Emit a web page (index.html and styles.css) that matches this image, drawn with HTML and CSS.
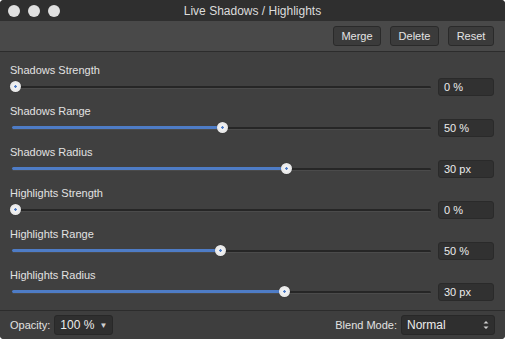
FILE: index.html
```html
<!DOCTYPE html>
<html lang="en">
<head>
  <meta charset="UTF-8" />
  <title>Live Shadows / Highlights</title>
  <link rel="stylesheet" href="styles.css">
</head>
<body>
  <div class="window">
    <header class="titlebar">
      <div class="lights">
        <span class="light"></span>
        <span class="light"></span>
        <span class="light"></span>
      </div>
      <h1>Live Shadows / Highlights</h1>
    </header>

    <div class="toolbar">
      <button class="btn-merge">Merge</button>
      <button class="btn-delete">Delete</button>
      <button class="btn-reset">Reset</button>
    </div>

    <div class="panel">
      <div class="row">
        <label>Shadows Strength</label>
        <div class="control">
          <div class="track">
            <div class="fill" style="width: 3px"></div>
            <span class="knob" style="left: 3px"></span>
          </div>
          <div class="value">0 %</div>
        </div>
      </div>
      <div class="row">
        <label>Shadows Range</label>
        <div class="control">
          <div class="track">
            <div class="fill" style="width: 210px"></div>
            <span class="knob" style="left: 210px"></span>
          </div>
          <div class="value">50 %</div>
        </div>
      </div>
      <div class="row">
        <label>Shadows Radius</label>
        <div class="control">
          <div class="track">
            <div class="fill" style="width: 274px"></div>
            <span class="knob" style="left: 274px"></span>
          </div>
          <div class="value">30 px</div>
        </div>
      </div>
      <div class="row">
        <label>Highlights Strength</label>
        <div class="control">
          <div class="track">
            <div class="fill" style="width: 3px"></div>
            <span class="knob" style="left: 3px"></span>
          </div>
          <div class="value">0 %</div>
        </div>
      </div>
      <div class="row">
        <label>Highlights Range</label>
        <div class="control">
          <div class="track">
            <div class="fill" style="width: 208px"></div>
            <span class="knob" style="left: 208px"></span>
          </div>
          <div class="value">50 %</div>
        </div>
      </div>
      <div class="row">
        <label>Highlights Radius</label>
        <div class="control">
          <div class="track">
            <div class="fill" style="width: 272px"></div>
            <span class="knob" style="left: 272px"></span>
          </div>
          <div class="value">30 px</div>
        </div>
      </div>
    </div>

    <footer class="footer">
      <div class="field">
        <span>Opacity:</span>
        <div class="select opacity">100 %<span class="caret">&#9660;</span></div>
      </div>
      <div class="field">
        <span>Blend Mode:</span>
        <div class="select blend">Normal
          <span class="updown">
            <svg width="6" height="10" viewBox="0 0 6 10"><path d="M0.5 3.5 L3 1 L5.5 3.5 Z M0.5 6.5 L3 9 L5.5 6.5 Z" fill="#cfcfcf"/></svg>
          </span>
        </div>
      </div>
    </footer>
  </div>
</body>
</html>
```

FILE: styles.css
```css
body {
  margin: 0;
  padding: 0;
  background-color: #ffffff;
  font-family: "Liberation Sans", Arial, sans-serif;
  color: #e2e2e2;
}
.window {
  width: 505px;
  height: 339px;
  display: flex;
  flex-direction: column;
  background-color: #404040;
  border-radius: 4px;
  overflow: hidden;
}
.titlebar {
  height: 21px;
  background-color: #2f2f2f;
  display: flex;
  align-items: center;
  position: relative;
}
.lights {
  display: flex;
  gap: 8px;
  padding-left: 8px;
}
.light {
  width: 12px;
  height: 12px;
  border-radius: 50%;
  background-color: #dfdfdf;
}
.titlebar h1 {
  position: absolute;
  left: 0;
  right: 0;
  margin: 0;
  text-align: center;
  font-size: 12px;
  font-weight: normal;
  color: #dcdcdc;
}
.toolbar {
  height: 30px;
  background-color: #494949;
  border-bottom: 1px solid #2c2c2c;
  display: flex;
  justify-content: flex-end;
  align-items: center;
  gap: 9px;
  padding-right: 11px;
}
.toolbar button {
  height: 20px;
  padding: 0;
  background-color: #3b3b3b;
  border: 1px solid #2a2a2a;
  border-radius: 3px;
  color: #e4e4e4;
  font-family: inherit;
  font-size: 11px;
}
.btn-merge {
  width: 48px;
}
.btn-delete {
  width: 49px;
}
.btn-reset {
  width: 46px;
}
.panel {
  flex: 1;
  padding: 11px 11px 0 10px;
  display: flex;
  flex-direction: column;
}
.row {
  display: flex;
  flex-direction: column;
  height: 41px;
}
.row label {
  font-size: 11px;
  line-height: 14px;
  height: 15px;
  color: #e2e2e2;
}
.control {
  display: flex;
  align-items: center;
  gap: 7px;
  height: 18px;
}
.track {
  flex: 1;
  height: 2px;
  margin-left: 2px;
  background-color: #262626;
  border-bottom: 1px solid #4b4b4b;
  border-radius: 2px;
  position: relative;
}
.fill {
  height: 3px;
  margin-top: -1px;
  background-color: #4e7cc6;
  border-radius: 2px;
}
.knob {
  position: absolute;
  top: -5px;
  width: 11px;
  height: 11px;
  margin-left: -5px;
  border-radius: 50%;
  background: radial-gradient(circle, #4e7cc6 0, #4e7cc6 1px, #f4f4f4 1.5px, #dcdcdc 100%);
  box-shadow: 0 0 1px rgba(0, 0, 0, 0.6);
}
.value {
  width: 56px;
  height: 18px;
  padding-left: 5px;
  background-color: #313131;
  border: 1px solid #2a2a2a;
  border-radius: 3px;
  box-sizing: border-box;
  font-size: 11px;
  line-height: 16px;
  color: #ececec;
}
.footer {
  height: 28px;
  border-top: 1px solid #2c2c2c;
  background-color: #3e3e3e;
  display: flex;
  justify-content: space-between;
  align-items: center;
  padding: 0 10px;
  font-size: 11px;
}
.field {
  display: flex;
  align-items: center;
  gap: 4px;
}
.select {
  height: 20px;
  box-sizing: border-box;
  padding: 0 5px;
  background-color: #2f2f2f;
  border: 1px solid #282828;
  border-radius: 3px;
  display: flex;
  align-items: center;
  justify-content: space-between;
  font-size: 12px;
  color: #ececec;
}
.opacity {
  width: 59px;
}
.blend {
  width: 94px;
}
.caret {
  font-size: 8px;
  color: #cfcfcf;
}
.updown {
  display: flex;
  align-items: center;
}
```
